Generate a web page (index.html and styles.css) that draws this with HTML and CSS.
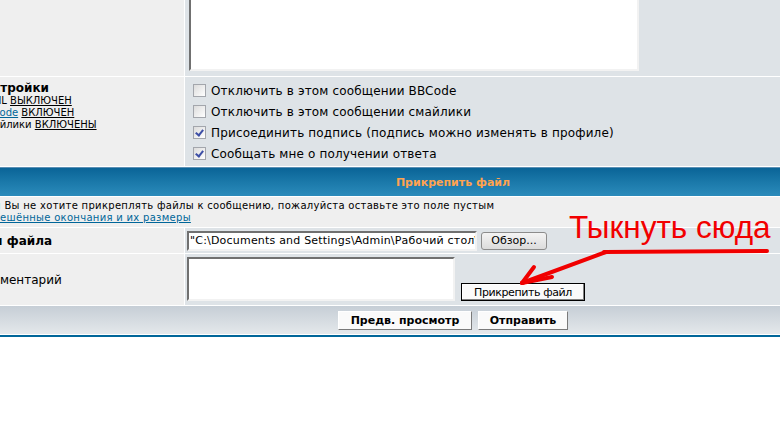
FILE: index.html
```html
<!DOCTYPE html>
<html lang="ru">
<head>
<meta charset="utf-8">
<title>Прикрепить файл</title>
<link rel="stylesheet" href="styles.css">
</head>
<body>
<form class="forumline">
  <div class="cell row1"></div>
  <div class="cell row2 msg-cell"><textarea class="post msg"></textarea></div>

  <div class="cell row1 opts-label">
    <div class="gen"><b>Настройки</b></div>
    <div class="gensmall">HTML <u>ВЫКЛЮЧЕН</u></div>
    <div class="gensmall"><a href="#">BBCode</a> <u>ВКЛЮЧЕН</u></div>
    <div class="gensmall">Смайлики <u>ВКЛЮЧЕНЫ</u></div>
  </div>
  <div class="cell row2 opts">
    <label class="opt"><input type="checkbox" class="cb"> Отключить в этом сообщении BBCode</label>
    <label class="opt"><input type="checkbox" class="cb"> Отключить в этом сообщении смайлики</label>
    <label class="opt"><input type="checkbox" class="cb" checked> Присоединить подпись (подпись можно изменять в профиле)</label>
    <label class="opt"><input type="checkbox" class="cb" checked> Сообщать мне о получении ответа</label>
  </div>

  <div class="cell th span">Прикрепить файл</div>

  <div class="cell row1 span info">
    <div>Если Вы не хотите прикреплять файлы к сообщению, пожалуйста оставьте это поле пустым</div>
    <div><a href="#">Разрешённые окончания и их размеры</a></div>
  </div>

  <div class="cell row1 label"><b>Имя файла</b></div>
  <div class="cell row2 file-cell">
    <input type="text" class="file-path" value="&quot;C:\Documents and Settings\Admin\Рабочий стол\photo.jpg&quot;" readonly>
    <button type="button" class="browse">Обзор...</button>
  </div>

  <div class="cell row1 label">Комментарий</div>
  <div class="cell row2 comment-cell">
    <textarea class="post comment"></textarea>
    <button type="button" class="attach-btn">Прикрепить файл</button>
  </div>

  <div class="cell cat-bottom span">
    <button type="button" class="mainoption preview">Предв. просмотр</button>
    <button type="button" class="mainoption submit">Отправить</button>
  </div>
</form>

<div class="callout">Тыкнуть сюда</div>
<svg class="arrow" width="280" height="60" viewBox="500 240 280 60" aria-hidden="true">
  <path d="M604 252 L767 251" />
  <path d="M606 252 L522 283" />
  <path d="M522 283 L534 267" />
  <path d="M522 283 L552 277" />
</svg>
</body>
</html>
```

FILE: styles.css
```css
html, body {
  margin: 0;
  padding: 0;
  overflow: hidden;
  background: #ffffff;
}

body {
  width: 780px;
  height: 435px;
  position: relative;
  font-family: "DejaVu Sans", Verdana, sans-serif;
  color: #000000;
}

.forumline {
  display: grid;
  grid-template-columns: 213px 1fr;
  grid-template-rows: 224px 89px 29px 30px 25px 51px 28px;
  gap: 1px;
  padding: 1px;
  background: #ffffff;
  border: 2px solid #006699;
  width: 964px;
  margin: -151px 0 0 -32px;
}

.cell {
  box-sizing: border-box;
  min-width: 0;
}

.row1 { background: #efefef; }
.row2 { background: #dee3e7; }
.span { grid-column: 1 / -1; }

a { color: #006699; }

/* message */
.msg-cell {
  padding: 4px 0 5px 4px;
}
.post {
  display: block;
  box-sizing: border-box;
  margin: 0;
  resize: none;
  background: #ffffff;
  border-style: solid;
  border-width: 2px;
  border-color: #707070 #f2f2f2 #f2f2f2 #707070;
  outline: none;
}
.msg {
  width: 450px;
  height: 215px;
}

/* options */
.opts-label {
  padding: 4px 4px;
  white-space: nowrap;
}
.gen {
  font-size: 12px;
  line-height: 14px;
}
.gensmall {
  font-size: 10px;
  line-height: 12px;
}
.opts-label .gensmall {
  padding-left: 4px;
}
.opts {
  padding: 3px 0 0 8px;
}
.opt {
  display: flex;
  align-items: center;
  gap: 5px;
  height: 21px;
  font-size: 12px;
  letter-spacing: 0.15px;
  white-space: nowrap;
}
.cb {
  appearance: none;
  -webkit-appearance: none;
  position: relative;
  width: 13px;
  height: 13px;
  margin: 0;
  box-sizing: border-box;
  border: 1px solid #a3a6ac;
  background: linear-gradient(135deg, #dcdcdc 0%, #f4f4f4 70%, #ffffff 100%);
  flex: none;
}
.cb:checked::after {
  content: "";
  position: absolute;
  left: 3px;
  top: 1px;
  width: 3px;
  height: 6px;
  border: solid #3d4fa6;
  border-width: 0 2px 2px 0;
  transform: rotate(38deg);
}

/* header */
.th {
  display: flex;
  align-items: center;
  justify-content: center;
  padding-top: 2px;
  color: #ffa34f;
  font-weight: bold;
  font-size: 11px;
  background: linear-gradient(#5b8fb4 0, #5b8fb4 1px, #0a6497 1px, #1a78a9 50%, #2b8bbb 100%);
}

/* info */
.info {
  padding: 3px 4px;
  font-size: 10px;
  line-height: 12px;
  letter-spacing: 0.3px;
  white-space: nowrap;
}

/* labels */
.label {
  display: flex;
  align-items: center;
  padding-left: 4px;
  font-size: 12px;
  white-space: nowrap;
}

/* file */
.file-cell {
  display: flex;
  align-items: center;
  gap: 4px;
  padding-left: 2px;
}
.file-path {
  box-sizing: border-box;
  width: 290px;
  height: 20px;
  margin: 0;
  padding: 0 0 0 1px;
  font: 11px "DejaVu Sans", Verdana, sans-serif;
  letter-spacing: 0.2px;
  color: #000;
  background: #ffffff;
  border-style: solid;
  border-width: 2px;
  border-color: #707070 #f2f2f2 #f2f2f2 #707070;
  outline: none;
}
.browse {
  box-sizing: border-box;
  width: 66px;
  height: 18px;
  margin: 0;
  padding: 0;
  font: 11px "DejaVu Sans", Verdana, sans-serif;
  color: #000;
  background: linear-gradient(#f4f4f4, #dcdcdc);
  border: 1px solid #8c8c8c;
  border-radius: 3px;
}

/* comment */
.comment-cell {
  display: flex;
  align-items: flex-end;
  gap: 6px;
  padding: 3px 2px 4px;
}
.comment {
  width: 268px;
  height: 44px;
}
.attach-btn {
  box-sizing: border-box;
  width: 124px;
  height: 18px;
  margin: 0;
  padding: 0;
  font: 11px "DejaVu Sans", Verdana, sans-serif;
  letter-spacing: -0.4px;
  color: #000;
  background: #fafafa;
  border: 1px solid #000000;
  box-shadow: inset -1px -1px 0 #808080, inset 1px 1px 0 #ffffff;
}

/* bottom */
.cat-bottom {
  display: flex;
  align-items: center;
  justify-content: center;
  gap: 6px;
  background: linear-gradient(#c6ced6, #e4e8eb);
}
.mainoption {
  box-sizing: border-box;
  height: 19px;
  margin: 0;
  padding: 0;
  font: bold 11px "DejaVu Sans", Verdana, sans-serif;
  color: #000;
  background: #fafafa;
  border-style: solid;
  border-width: 1px;
  border-color: #ffffff #7a7a7a #7a7a7a #ffffff;
}
.preview { width: 134px; }
.submit { width: 90px; }

/* annotation */
.callout {
  position: absolute;
  left: 569px;
  top: 212px;
  font: 31.5px/1 "Liberation Sans", Arial, sans-serif;
  color: #f20000;
  white-space: nowrap;
}
.arrow {
  position: absolute;
  left: 500px;
  top: 240px;
  fill: none;
  stroke: #f00000;
  stroke-width: 4;
  stroke-linecap: round;
  stroke-linejoin: round;
}
```
